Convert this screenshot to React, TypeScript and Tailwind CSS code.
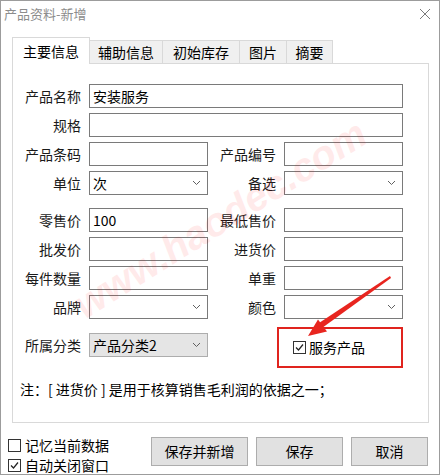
import React from "react";

const Chevron = () => (
  <svg width="9" height="6" viewBox="0 0 9 6" className="absolute right-[6px] top-1/2 -translate-y-1/2">
    <polyline points="1,1 4.5,4.5 8,1" fill="none" stroke="#606060" strokeWidth="1" />
  </svg>
);

const Box = ({ checked }: { checked?: boolean }) => (
  <span className="relative inline-block w-[13px] h-[13px] border border-[#333] bg-white shrink-0">
    {checked && (
      <svg width="11" height="11" viewBox="0 0 11 11" className="absolute left-0 top-0">
        <polyline points="2,5.5 4.5,8 9,2.5" fill="none" stroke="#222" strokeWidth="1.2" />
      </svg>
    )}
  </span>
);

const Field = ({ value = "", wide = false }: { value?: string; wide?: boolean }) => (
  <div
    className={`${wide ? "w-[314px]" : "w-[119px]"} h-[24px] border border-[#7a7a7a] bg-white px-[3px] flex items-center text-[14px] text-black`}
  >
    {value}
  </div>
);

const Select = ({ value = "", disabled = false }: { value?: string; disabled?: boolean }) => (
  <div
    className={`relative w-[119px] h-[24px] border ${disabled ? "border-[#adadad] bg-[#e5e5e5]" : "border-[#7a7a7a] bg-white"} px-[3px] flex items-center text-[14px] text-black`}
  >
    {value}
    <Chevron />
  </div>
);

const Label = ({ children }: { children: React.ReactNode }) => (
  <div className="w-[68px] text-right text-[14px] text-[#1a1a1a] mr-[8px] leading-[24px]">{children}</div>
);

const tabs = [
  { name: "辅助信息", w: "w-[74px]" },
  { name: "初始库存", w: "w-[78px]" },
  { name: "图片", w: "w-[48px]" },
  { name: "摘要", w: "w-[47px]" },
];

export default function App() {
  return (
    <div className="relative w-[440px] h-[475px] bg-white border border-[#9c9c9c] overflow-hidden font-['Noto_Sans_CJK_SC',sans-serif] text-[#1a1a1a]">
      {/* title bar */}
      <div className="h-[26px] flex items-center justify-between pl-[3px] pr-[8px]">
        <span className="text-[13px] text-[#8c8c8c]">产品资料-新增</span>
        <svg width="12" height="12" viewBox="0 0 12 12">
          <path d="M1 1L11 11M11 1L1 11" stroke="#7a7a7a" strokeWidth="1" />
        </svg>
      </div>

      {/* tabs */}
      <div className="ml-[11px] mt-[10px] flex items-end h-[26px]">
        <div className="relative z-10 w-[78px] h-[27px] -mb-px bg-white border border-[#d9d9d9] border-b-0 flex items-center justify-center text-[14px] text-black">
          主要信息
        </div>
        {tabs.map((t) => (
          <div
            key={t.name}
            className={`${t.w} h-[23px] -ml-px bg-[#f0f0f0] border border-[#d9d9d9] border-b-0 flex items-center justify-center text-[14px] text-black`}
          >
            {t.name}
          </div>
        ))}
      </div>

      {/* panel */}
      <div className="ml-[11px] w-[417px] h-[360px] border border-[#d9d9d9] bg-white pt-[20px]">
        <div className="flex flex-col gap-[5px]">
          <div className="flex items-center h-[24px]">
            <Label>产品名称</Label>
            <Field value="安装服务" wide />
          </div>
          <div className="flex items-center h-[24px]">
            <Label>规格</Label>
            <Field wide />
          </div>
          <div className="flex items-center h-[24px]">
            <Label>产品条码</Label>
            <Field />
            <Label>产品编号</Label>
            <Field />
          </div>
          <div className="flex items-center h-[24px]">
            <Label>单位</Label>
            <Select value="次" />
            <Label>备选</Label>
            <Select />
          </div>

          <div className="flex items-center h-[24px] mt-[8px]">
            <Label>零售价</Label>
            <Field value="100" />
            <Label>最低售价</Label>
            <Field />
          </div>
          <div className="flex items-center h-[24px]">
            <Label>批发价</Label>
            <Field />
            <Label>进货价</Label>
            <Field />
          </div>
          <div className="flex items-center h-[24px]">
            <Label>每件数量</Label>
            <Field />
            <Label>单重</Label>
            <Field />
          </div>
          <div className="flex items-center h-[24px]">
            <Label>品牌</Label>
            <Select />
            <Label>颜色</Label>
            <Select />
          </div>

          <div className="flex items-start mt-[3px]">
            <div className="flex items-center mt-[6px]">
              <Label>所属分类</Label>
              <Select value="产品分类2" disabled />
            </div>
            <div className="ml-[69px] w-[126px] h-[41px] border-2 border-[#e0241e] flex items-center pl-[14px] gap-[3px] text-[14px] text-black">
              <Box checked />
              服务产品
            </div>
          </div>
        </div>

        <div className="mt-[11px] pl-[7px] text-[14px] leading-[20px] text-black">
          注：[ 进货价 ] 是用于核算销售毛利润的依据之一；
        </div>
      </div>

      {/* bottom */}
      <div className="flex items-start mt-[12px] pl-[7px] pr-[11px]">
        <div className="flex flex-col text-[14px] text-black">
          <div className="flex items-center gap-[4px] h-[20px]">
            <Box />
            记忆当前数据
          </div>
          <div className="flex items-center gap-[4px] h-[20px]">
            <Box checked />
            自动关闭窗口
          </div>
        </div>
        <div className="ml-auto flex gap-[8px] mt-[2px]">
          <button className="w-[97px] h-[29px] bg-[#e1e1e1] border border-[#adadad] text-[14px] text-black">保存并新增</button>
          <button className="w-[87px] h-[29px] bg-[#e1e1e1] border border-[#adadad] text-[14px] text-black">保存</button>
          <button className="w-[77px] h-[29px] bg-[#e1e1e1] border border-[#adadad] text-[14px] text-black">取消</button>
        </div>
      </div>

      {/* watermark */}
      <div className="absolute left-[52px] top-[192px] w-[320px] text-center rotate-[-32deg] pointer-events-none text-[40px] font-bold italic text-[#ff0000] opacity-[0.08] font-['Liberation_Sans',sans-serif]">
        www.haodec.com
      </div>

      {/* red arrow */}
      <svg className="absolute left-0 top-0 pointer-events-none" width="440" height="475" viewBox="0 0 440 475">
        <polygon points="389,275 390,277 321,327 318,322" fill="#e8251f" />
        <polygon points="307,335 317,318.5 326,330.5" fill="#e8251f" />
      </svg>
    </div>
  );
}
